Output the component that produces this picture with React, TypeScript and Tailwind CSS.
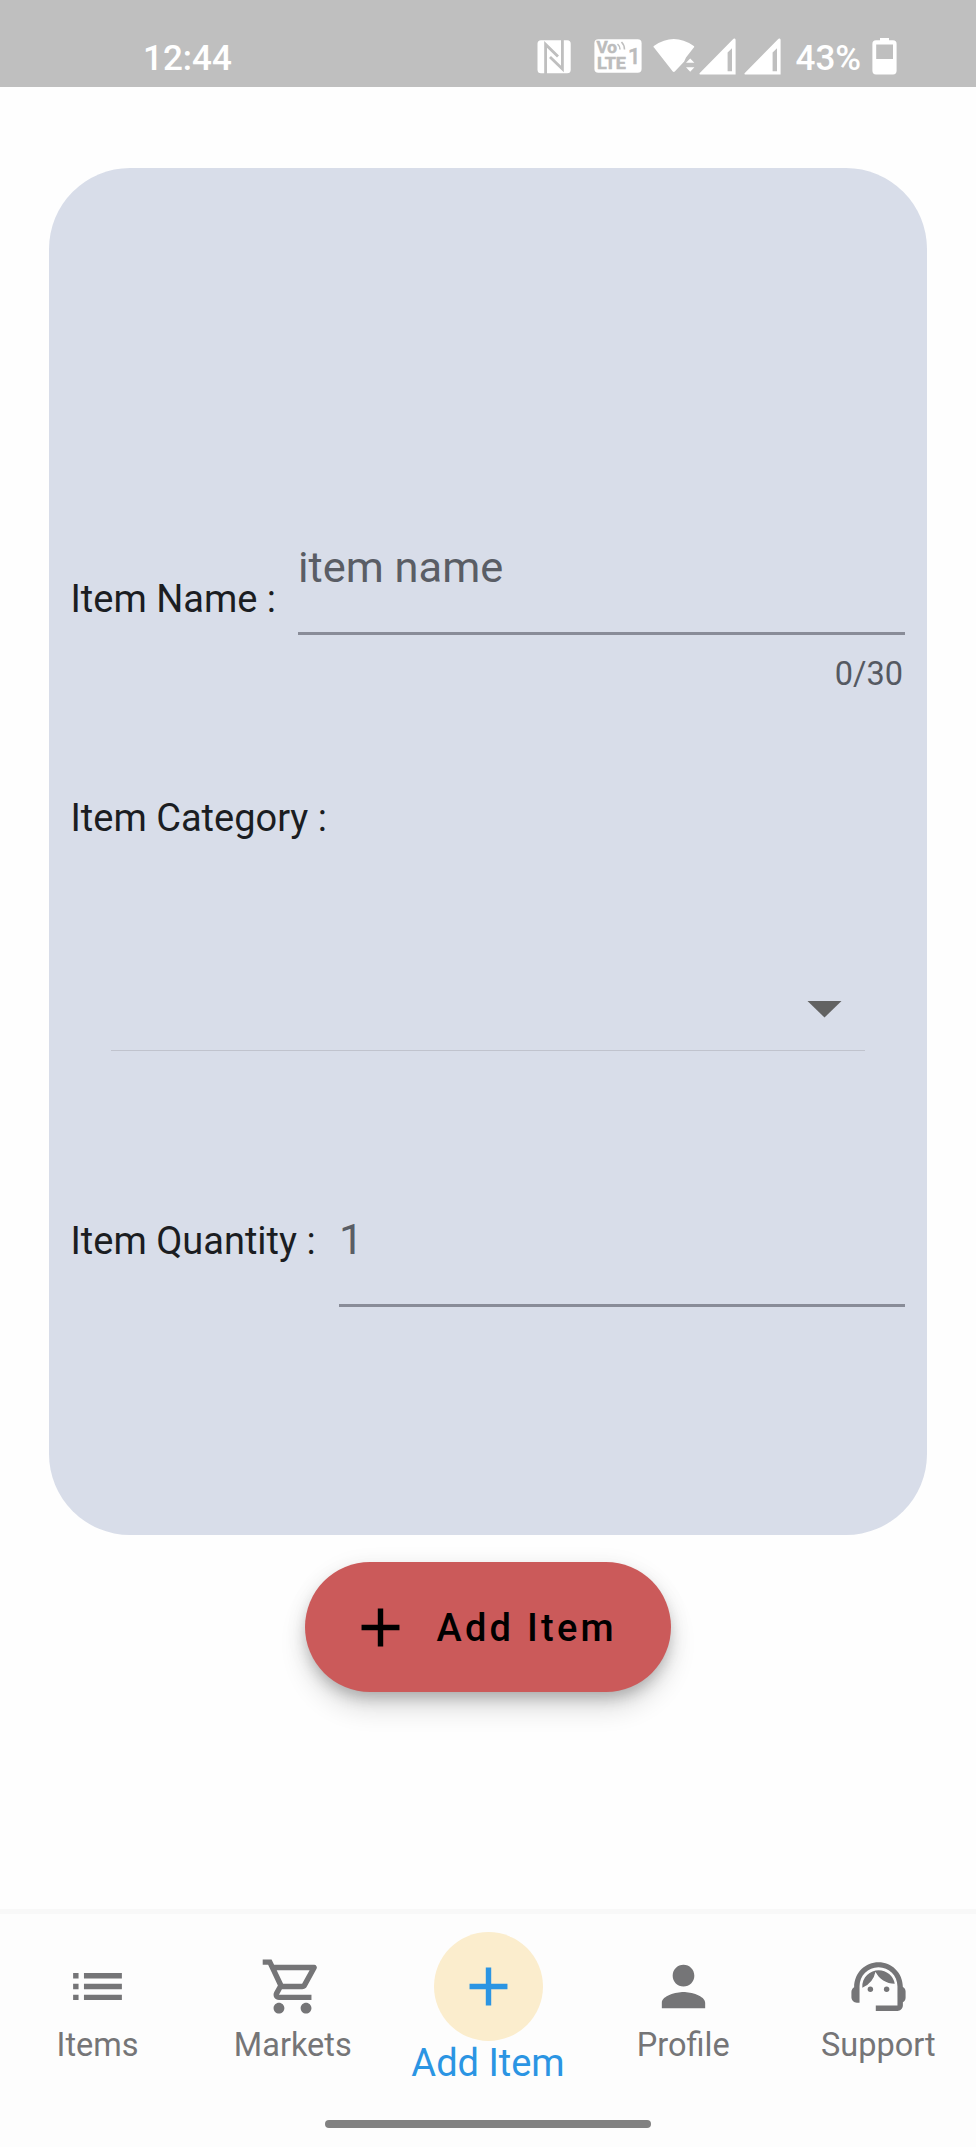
import type { ReactNode } from "react";
import { MdAdd, MdList, MdOutlineShoppingCart, MdPerson, MdSupportAgent } from "react-icons/md";

function SignalIcon() {
  return (
    <svg width="37" height="37" viewBox="0 0 37 37" fill="white">
      <path fillRule="evenodd" d="M35 .6Q36.6 0 36.6 2V36.6H1.2Q-.2 36.2.8 35L34 1.2ZM28.6 14.4V33.2H33V10.2Z" />
    </svg>
  );
}

function StatusBar() {
  return (
    <header className="flex h-[87px] shrink-0 items-start bg-[#bfbfbf] font-medium text-white">
      <span className="mt-[38px] ml-[143px] text-[35px] leading-[42px]">12:44</span>
      <div className="mt-[37px] ml-auto flex w-[439.5px] items-start">
        <svg className="mt-[3px]" width="34" height="34" viewBox="0 0 34 34">
          <rect x=".5" y=".3" width="33.2" height="33" rx="3.5" fill="white" />
          <path d="M8.6 34V4.4L21 16.6M13 17L25.4 29V0" fill="none" stroke="#bfbfbf" strokeWidth="2.8" />
        </svg>
        <svg className="mt-[2px] ml-[23px]" width="48" height="34" viewBox="0 0 48 34">
          <rect x=".4" y=".2" width="47.2" height="33.6" rx="4" fill="white" />
          <g fill="#bcbcbc" stroke="#bcbcbc" strokeWidth=".5" fontFamily="Roboto, sans-serif" fontWeight="700">
            <text x="2.5" y="14.2" fontSize="16" textLength="20.5" lengthAdjust="spacingAndGlyphs">Vo</text>
            <text x="3" y="30.4" fontSize="16.5" textLength="29" lengthAdjust="spacingAndGlyphs">LTE</text>
            <text x="34" y="25.3" fontSize="22" fontWeight="500">1</text>
          </g>
          <path d="M23.5 5Q26 7 26 10.5M27.5 3Q30.5 6 30.5 10.5" fill="none" stroke="#bfbfbf" strokeWidth="1.6" />
        </svg>
        <svg className="mt-[2px] ml-[11px]" width="42" height="34" viewBox="0 0 42 34" fill="white">
          <path d="M1 8.6Q-.2 7.6 1.2 6.8Q20.8-6.6 40.4 6.8Q41.8 7.6 40.8 8.6L33 18.6L31.2 22.6L21.8 32.5Q20.8 33.4 19.8 32.5Z" />
          <path d="M33 23.8L37.2 19.4L41.4 23.8ZM33 28.2L37.2 32.8L41.4 28.2Z" />
        </svg>
        <span className="mt-[1px] ml-[4px] flex gap-[8px]"><SignalIcon /><SignalIcon /></span>
        <span className="mt-[1px] ml-[15px] w-[66px] text-[35px] leading-[42px]">43%</span>
        <svg className="ml-[10px]" width="25" height="38" viewBox="0 0 25 38" fill="white">
          <path fillRule="evenodd" d="M8 1H17V3.3H21Q24.6 3.3 24.6 7V33.8Q24.6 37.4 21 37.4H4Q.4 37.4.4 33.8V7Q.4 3.3 4 3.3H8ZM4.2 7.5V22H21V7.5Z" />
        </svg>
      </div>
    </header>
  );
}

function Label({ children }: { children: ReactNode }) {
  return <label className="text-[38px] leading-[44px] whitespace-nowrap text-[#1b1d22]">{children}</label>;
}

function ItemForm() {
  return (
    <section className="mr-[49px] ml-[49px] mt-[81px] flex h-[1367px] shrink-0 flex-col rounded-[81px] bg-[#d8dde9] pr-[22px] pl-[21.5px]">
      <div className="mt-[373px] flex h-[152px] justify-between">
        <div className="mt-[36px]"><Label>Item Name :</Label></div>
        <div className="flex w-[607px] flex-col">
          <div className="h-[93.5px] shrink-0 border-b-[3px] border-[#898c98] pt-[1px] text-[43.4px] leading-[52px] text-[#5a5d65]">item name</div>
          <span className="mt-[20px] self-end pr-[2px] text-[32.5px] leading-[38px] text-[#555962]">0/30</span>
        </div>
      </div>
      <div className="mt-[103px] flex"><Label>Item Category :</Label></div>
      <div className="mt-[160px] mr-[40px] ml-[40.5px] flex h-[51px] justify-end border-b border-[#c0c3cd] pr-[23px]">
        <svg className="mt-[.5px]" width="35" height="17" viewBox="0 0 35 17"><path d="M.5 0H34.5L17.5 16.5Z" fill="#626262" /></svg>
      </div>
      <div className="mt-[163px] flex justify-between">
        <div className="mt-[5px]"><Label>Item Quantity :</Label></div>
        <div className="h-[93px] w-[566px] border-b-[3px] border-[#898c98] text-[43.4px] leading-[52px] text-[#5a5d65]">1</div>
      </div>
    </section>
  );
}

function NavItem({ icon, label }: { icon: ReactNode; label: string }) {
  return (
    <a className="flex flex-1 flex-col items-center pt-[40px] text-[65px] text-[#757577]">
      {icon}
      <span className="mt-[7px] text-[32.5px] leading-[38px]">{label}</span>
    </a>
  );
}

export default function App() {
  return (
    <div className="flex h-[2147px] w-[976px] flex-col overflow-hidden bg-[#fefefe] font-[Roboto,sans-serif]">
      <StatusBar />
      <ItemForm />
      <button className="mt-[27px] flex h-[130px] w-[366px] shrink-0 items-center self-center rounded-full bg-[#cb5a5a] pl-[43px] text-black shadow-[0_8px_14px_-3px_rgba(0,0,0,0.2),0_16px_27px_rgba(0,0,0,0.14),0_3px_24px_rgba(0,0,0,0.06)]">
        <MdAdd className="text-[65px]" />
        <span className="mt-[2px] ml-[23.5px] text-[38px] leading-[44px] font-medium tracking-[3.25px] whitespace-nowrap">Add Item</span>
      </button>
      <nav className="mt-auto flex h-[238px] shrink-0 flex-col border-t-[5px] border-[#f8f8f8] bg-[#fdfdfd]">
        <div className="flex h-[206px]">
          <NavItem icon={<MdList />} label="Items" />
          <NavItem icon={<MdOutlineShoppingCart />} label="Markets" />
          <a className="flex flex-1 flex-col items-center pt-[18px] text-[#2b95e3]">
            <span className="flex size-[109px] items-center justify-center rounded-full bg-[#fbedcd]">
              <MdAdd className="text-[65px]" />
            </span>
            <span className="text-[38px] leading-[44px] whitespace-nowrap">Add Item</span>
          </a>
          <NavItem icon={<MdPerson />} label="Profile" />
          <NavItem icon={<MdSupportAgent />} label="Support" />
        </div>
        <div className="h-[8px] w-[326px] self-center rounded-full bg-[#818181]" />
      </nav>
    </div>
  );
}
